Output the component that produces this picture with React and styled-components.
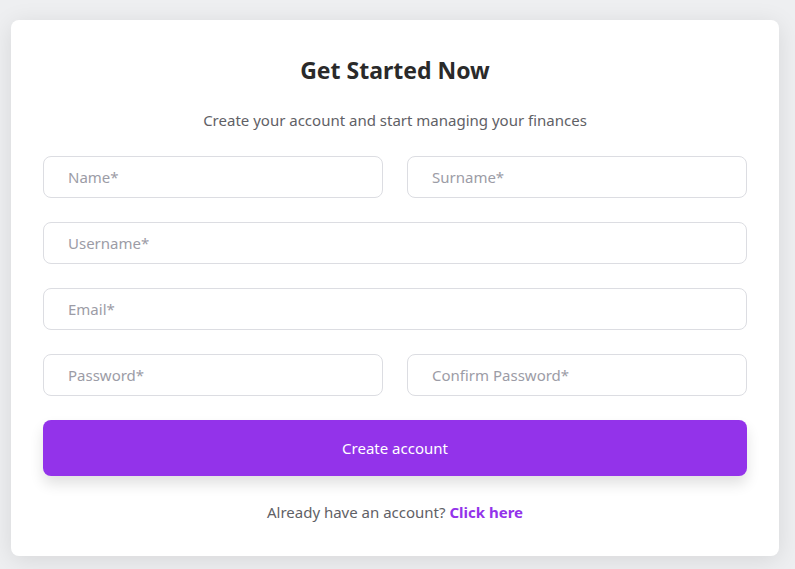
import React from 'react'
import styled, { createGlobalStyle } from 'styled-components'

const GlobalStyle = createGlobalStyle`
    * { box-sizing: border-box; }
    body {
        margin: 0;
        background-color: #eeeff1;
        font-family: "Noto Sans", "Open Sans", sans-serif;
    }
`

const Page = styled.div`
    width: 795px;
    height: 569px;
    padding: 20px 16px 0 11px;
`

const Card = styled.form`
    width: 768px;
    background-color: #ffffff;
    border-radius: 8px;
    box-shadow: 0 4px 24px rgba(0, 0, 0, 0.1);
    padding: 33px 32px 32px;
    display: flex;
    flex-direction: column;
    align-items: stretch;
`

const Title = styled.h1`
    margin: 0;
    font-size: 23px;
    line-height: 34px;
    font-weight: 700;
    color: #2a2a2a;
    text-align: center;
`

const Subtitle = styled.p`
    margin: 21px 0 24px;
    font-size: 15px;
    line-height: 24px;
    color: #5f6166;
    text-align: center;
`

const Fields = styled.div`
    display: flex;
    flex-direction: column;
    gap: 24px;
`

const Row = styled.div`
    display: grid;
    grid-template-columns: ${(p) => (p.$cols === 2 ? '1fr 1fr' : '1fr')};
    gap: 24px;
`

const Input = styled.input`
    height: 42px;
    width: 100%;
    border: 1px solid #dcdde2;
    border-radius: 8px;
    padding: 0 24px;
    font-family: inherit;
    font-size: 15px;
    color: #2b2b2b;
    outline: none;

    &::placeholder {
        color: #9c9ca6;
    }
`

const SubmitButton = styled.button`
    margin-top: 24px;
    height: 56px;
    border: none;
    border-radius: 8px;
    background-color: #9333ea;
    color: #ffffff;
    font-family: inherit;
    font-size: 15px;
    box-shadow: 0 8px 14px rgba(0, 0, 0, 0.12);
    cursor: pointer;
`

const Footer = styled.p`
    margin: 24px 0 0;
    font-size: 15px;
    line-height: 24px;
    color: #5f6166;
    text-align: center;
`

const Link = styled.a`
    color: #9333ea;
    font-weight: 700;
    text-decoration: none;
`

const App = () => {
    const submitHandler = (event) => {
        event.preventDefault()
    }

    return (
        <>
            <GlobalStyle />
            <Page>
                <Card onSubmit={submitHandler}>
                    <Title>Get Started Now</Title>
                    <Subtitle>Create your account and start managing your finances</Subtitle>
                    <Fields>
                        <Row $cols={2}>
                            <Input placeholder="Name*" />
                            <Input placeholder="Surname*" />
                        </Row>
                        <Row>
                            <Input placeholder="Username*" />
                        </Row>
                        <Row>
                            <Input placeholder="Email*" type="email" />
                        </Row>
                        <Row $cols={2}>
                            <Input placeholder="Password*" type="password" />
                            <Input placeholder="Confirm Password*" type="password" />
                        </Row>
                    </Fields>
                    <SubmitButton type="submit">Create account</SubmitButton>
                    <Footer>
                        Already have an account? <Link href="#">Click here</Link>
                    </Footer>
                </Card>
            </Page>
        </>
    )
}

export default App
